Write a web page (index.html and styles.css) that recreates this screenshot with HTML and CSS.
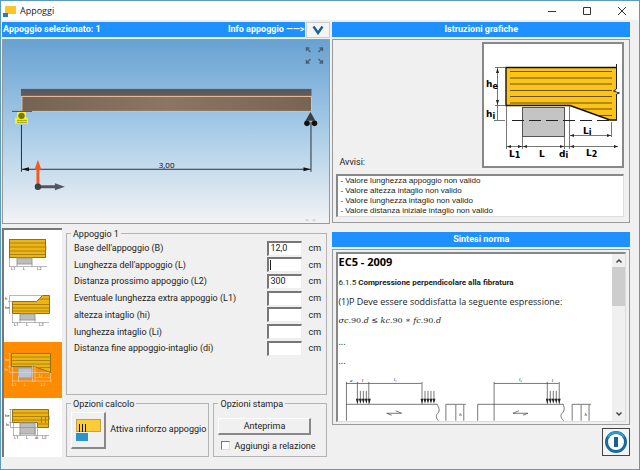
FILE: index.html
```html
<!DOCTYPE html>
<html lang="it">
  <head>
    <meta charset="UTF-8" />
    <meta name="viewport" content="width=device-width, initial-scale=1.0" />
    <title>Appoggi</title>
    <link rel="stylesheet" href="styles.css">
  </head>
  <body>
    <div class="window">
      <header class="titlebar">
        <svg class="app-icon" viewBox="0 0 13 12" width="13" height="12">
          <rect x="2" y="1" width="11" height="8" fill="#f9c62c" />
          <rect x="0" y="8" width="5" height="4" fill="#2a7fb8" />
        </svg>
        <h1>Appoggi</h1>
        <button type="button" class="win-btn" aria-label="Riduci">
          <svg viewBox="0 0 10 10" width="10" height="10"><path d="M1 5.500h8" /></svg>
        </button>
        <button type="button" class="win-btn" aria-label="Ingrandisci">
          <svg viewBox="0 0 10 10" width="10" height="10"><path d="M1.500 1.500h7v7h-7z" /></svg>
        </button>
        <button type="button" class="win-btn" aria-label="Chiudi">
          <svg viewBox="0 0 10 10" width="10" height="10"><path d="M1 1l8 8M9 1l-8 8" /></svg>
        </button>
      </header>

      <main class="content">
        <section class="column">
          <div class="view-head">
            <h2 class="bar bar-split"><span>Appoggio selezionato: 1</span><span>Info appoggio ——&gt;</span></h2>
            <button type="button" class="info-btn" aria-label="Info appoggio">
              <svg viewBox="0 0 12 10" width="12" height="10"><path d="M1.500 1.500L6 8l4.500-6.500" fill="none" stroke="#1b6390" stroke-width="2.400" /></svg>
            </button>
          </div>
          <div class="view">
            <svg viewBox="3 40 327 183">
              <path d="M311 52l-4-4M307 51v-3h3M319 52l4-4M320 48h3v3M311 59l-4 4M307 60v3h3M319 59l4 4M323 60v3h-3" fill="none" stroke="#4c5f70" stroke-width="1.400" />
              <rect x="21" y="89" width="291" height="5" fill="#535a60" />
              <rect x="21" y="94" width="291" height="2" fill="#6b5550" />
              <rect x="22" y="96.500" width="290" height="15" fill="url(#wood)" stroke="#e8bf98" />
              <path d="M12 111.500h20" stroke="#3a5360" />
              <path d="M17 112h9v6h2v6H15v-6h2z" fill="#f4f41c" />
              <circle cx="21.500" cy="116" r="3.200" fill="#77770c" />
              <path d="M17 120.500h10M17 122.500h10" stroke="#8f8f10" stroke-width=".8" />
              <path d="M311 112l5 9h-10z" fill="#3b3f43" />
              <circle cx="307.500" cy="123.500" r="2.800" fill="#111" />
              <circle cx="315" cy="123.500" r="2.800" fill="#111" />
              <path d="M21.500 125v47M311.500 122v50M22 169.500h289" stroke="#26323c" fill="none" />
              <path d="M22 169.500l7-2v4zM311 169.500l-7-2v4z" fill="#111" />
              <text x="159" y="168" class="dim-text">3,00</text>
              <path d="M38 187v-18" stroke="#f15a24" stroke-width="3" />
              <path d="M34.500 170l3.500-10 3.500 10z" fill="#f15a24" />
              <path d="M38 187h18" stroke="#54585c" stroke-width="3" />
              <path d="M55 183.500l10 3.500-10 3.500z" fill="#54585c" />
              <circle cx="38" cy="187" r="3.200" fill="#3d4145" />
              <path d="M306 220.500h3M313 220.500h3" stroke="#d3d6d9" stroke-width="2" />
              <defs>
                <linearGradient id="wood" x1="0" x2="1">
                  <stop offset="0" stop-color="#756352" />
                  <stop offset=".5" stop-color="#8a7663" />
                  <stop offset="1" stop-color="#786453" />
                </linearGradient>
              </defs>
            </svg>
          </div>

          <div class="editor">
            <nav class="thumbs">
              <button type="button" aria-label="Appoggio semplice">
                <svg viewBox="4 231 58 56">
                  <rect x="9.500" y="240.500" width="36" height="18" class="wood" />
                  <path d="M10 244h35M10 248h35M10 252h35M10 255.500h35" class="grain" />
                  <rect x="17" y="259" width="15" height="6" class="block" />
                  <path d="M9 267.500h38M9.500 259v9M17 265v3M32 265v3M46 247v4" class="fine" />
                  <text x="11" y="271">L1</text><text x="23" y="271">L</text><text x="37" y="271">L2</text>
                </svg>
              </button>
              <button type="button" aria-label="Appoggio con intaglio superiore">
                <svg viewBox="4 287 58 56">
                  <path d="M12.500 302.500h24l6-6h7v18h-37z" class="wood" />
                  <path d="M13 305.500h36M13 309h36M13 312h36M39 300h10" class="grain" />
                  <rect x="20" y="315" width="15" height="6" class="block" />
                  <path d="M10 296.500h32M9.500 296v19M8 302.500h5M12 323.500h37M12.500 315v9M20 320v4M35 320v4M49.500 304v3" class="fine" />
                  <text x="5" y="301">h</text><text x="5" y="310">he</text><text x="14" y="327">L1</text><text x="26" y="327">L</text><text x="39" y="327">L2</text>
                </svg>
              </button>
              <button type="button" class="selected" aria-label="Appoggio con intaglio inclinato">
                <svg viewBox="4 343 58 56">
                  <path d="M11.500 354.500h39v19l-16-6h-23z" class="wood" />
                  <path d="M12 358h38M12 361.500h38M12 365h38M39 368.500h11" class="grain" />
                  <rect x="18" y="369" width="14" height="10" class="block" />
                  <path d="M9.500 354v20M8 354.500h3M8 367.500h3M9 373.500h40M12 382h40M12.500 368v15M18.500 377v6M32.500 367v16M35 367v16M50.500 374v9M35 378.500h15" class="fine" />
                  <text x="5" y="362">he</text><text x="5" y="372">hi</text><text x="12" y="387">L1</text><text x="24" y="387">L</text><text x="41" y="387">L2</text><text x="39" y="378">Li</text>
                </svg>
              </button>
              <button type="button" aria-label="Appoggio con rinforzo">
                <svg viewBox="4 400 58 56">
                  <path d="M12.500 411.500h36v18h-11v-5h-25z" class="wood" />
                  <path d="M13 415h35M13 418.500h35M13 422h35M38 426h10" class="grain" />
                  <path d="M41.500 419v6M45.500 419v6" stroke="#e2571e" />
                  <rect x="20" y="425" width="15" height="11" class="block" />
                  <path d="M10.500 411v18M9 411.500h4M9 424.500h4M10 429.500h27M13 437.500h36M13.500 425v13M20 435v3M35 430v8M37.500 429v9M49.500 418v4" class="fine" />
                  <text x="5" y="419">he</text><text x="6" y="428">hi</text><text x="14" y="441">L1</text><text x="26" y="441">L</text><text x="35" y="441">di</text><text x="42" y="441">L2</text>
                </svg>
              </button>
            </nav>

            <form class="forms">
              <fieldset class="group support">
                <legend>Appoggio 1</legend>
                <div class="fields">
                  <label for="base">Base dell'appoggio (B)</label><input type="text" id="base" value="12,0" /><span>cm</span>
                  <label for="length">Lunghezza dell'appoggio (L)</label><input type="text" id="length" class="editing" /><span>cm</span>
                  <label for="next">Distanza prossimo appoggio (L2)</label><input type="text" id="next" value="300" /><span>cm</span>
                  <label for="extra">Eventuale lunghezza extra appoggio (L1)</label><input type="text" id="extra" /><span>cm</span>
                  <label for="notch-height">altezza intaglio (hi)</label><input type="text" id="notch-height" /><span>cm</span>
                  <label for="notch-length">lunghezza intaglio (Li)</label><input type="text" id="notch-length" /><span>cm</span>
                  <label for="notch-end">Distanza fine appoggio-intaglio (di)</label><input type="text" id="notch-end" /><span>cm</span>
                </div>
              </fieldset>
              <div class="options">
                <fieldset class="group calc">
                  <legend>Opzioni calcolo</legend>
                  <button type="button" class="raised reinforce" id="reinforce">
                    <svg viewBox="0 0 26 24" width="26" height="24">
                      <rect x="1.500" y="1.500" width="24" height="12" fill="#fccb38" stroke="#c5a136" />
                      <rect x="1" y="15" width="12" height="8" fill="#2d93cb" />
                      <path d="M4.500 6v8M7.500 6v8M10.500 6v8" stroke="#111" />
                    </svg>
                  </button>
                  <label for="reinforce">Attiva rinforzo appoggio</label>
                </fieldset>
                <fieldset class="group print">
                  <legend>Opzioni stampa</legend>
                  <button type="button" class="raised preview">Anteprima</button>
                  <label class="check"><input type="checkbox" />Aggiungi a relazione</label>
                </fieldset>
              </div>
            </form>
          </div>
        </section>

        <section class="column">
          <h2 class="bar">Istruzioni grafiche</h2>
          <div class="panel guide">
            <div class="guide-top">
              <h3>Avvisi:</h3>
              <div class="sunken guide-picture">
                <svg viewBox="484 45 138 122">
                  <path d="M506 68.500h110V121h-6l-40-14.500h-64z" fill="#fcc419" />
                  <path d="M510 72.500h102M510 79h102M510 85h102M510 91.500h102M510 97.500h102M510 104h102M582 110h30M599 116.500h13" stroke="#6b510a" />
                  <path d="M616 68.500h-110v38h64L610 121h7" fill="none" stroke="#111" stroke-width="1.400" />
                  <path d="M616.500 65v25l-3 2 6 2-3 1v26" fill="none" stroke="#222" />
                  <rect x="522.500" y="108.500" width="42" height="29" fill="#c4c4c4" stroke="#555" />
                  <path d="M495 68.500h10M495 106.500h10M497.500 69v52M494 121.500h11M506.500 107v43M522.500 137v13M564.500 137v13M569.500 107v43M570 136.500h41M611.500 123v15M506 147.500h112" class="line" />
                  <path d="M512 121.500h98" stroke="#222" stroke-dasharray="12 5" />
                  <path d="M497.500 69l-1.500 5h3zM497.500 106l-1.500-5h3zM507 147.500l4-1.500v3zM522 147.500l-4-1.500v3zM523 147.500l4-1.500v3zM564 147.500l-4-1.500v3zM570 147.500l4-1.500v3zM618 147.500l-4-1.500v3zM570 136.500l4-1.500v3zM611 136.500l-4-1.500v3z" fill="#222" />
                  <g class="symbols">
                    <text x="486" y="88">h<tspan dy="2" class="sub">e</tspan></text>
                    <text x="486" y="118">h<tspan dy="2" class="sub">i</tspan></text>
                    <text x="583" y="135">L<tspan dy="1" class="sub">i</tspan></text>
                    <text x="509" y="158">L<tspan dy="1" class="sub">1</tspan></text>
                    <text x="539" y="158">L</text>
                    <text x="559" y="158">d<tspan dy="1" class="sub">i</tspan></text>
                    <text x="586" y="157">L<tspan dy="1" class="sub">2</tspan></text>
                  </g>
                </svg>
              </div>
            </div>
            <ul class="sunken warnings">
              <li>- Valore lunghezza appoggio non valido</li>
              <li>- Valore altezza intaglio non valido</li>
              <li>- Valore lunghezza intaglio non valido</li>
              <li>- Valore distanza iniziale intaglio non valido</li>
            </ul>
          </div>

          <h2 class="bar bar-norm">Sintesi norma</h2>
          <div class="panel norm">
            <div class="sunken reader">
              <article>
                <h3>EC5 - 2009</h3>
                <p class="clause">6.1.5 <b>Compressione perpendicolare alla fibratura</b></p>
                <p class="rule">(1)P Deve essere soddisfatta la seguente espressione:</p>
                <p class="formula"><i>σc</i>.90.<i>d</i> ≤ <i>kc</i>.90 ∗ <i>fc</i>.90.<i>d</i></p>
                <p>...</p>
                <p>...</p>
                <svg viewBox="338 376 275 47">
                  <path d="M346.500 384v39M346 385.500h76M357.500 384v22M369 384v22M422.500 384v22M346 406.500h92M495 384v39M495 385.500h65M548.500 384v22M560.500 384v22M478.500 423v-16.500h86M446.500 423v-16.500h20M456.500 407v16M573.500 423v-16.500h19M582.500 407v16M464.500 407v16M590.500 407v16" class="line" />
                  <path d="M437 406c4 5 3 8 1 10s-1 5 1 7M564 406c3 5 1 8-1 10s0 5 2 7" class="line" />
                  <path d="M360.500 393v10M363.500 393v10M366.500 393v10M425.500 393v10M428.500 393v10M431.500 393v10M434.500 393v10M551.500 393v10M554.500 393v10M557.500 393v10" class="line" />
                  <path d="M356 401h3l-1.500 5zM359 401h3l-1.500 5zM362 401h3l-1.500 5zM365 401h3l-1.500 5zM368 401h3l-1.500 5zM421 401h3l-1.500 5zM424 401h3l-1.500 5zM427 401h3l-1.500 5zM430 401h3l-1.500 5zM433 401h3l-1.500 5zM547 401h3l-1.500 5zM550 401h3l-1.500 5zM553 401h3l-1.500 5zM556 401h3l-1.500 5zM559 401h3l-1.500 5z" fill="#222" />
                  <path d="M402 415.500h-15M396 413l6 2.500M387 415.500l5 2M529 415.500h-15M514 415.500l6-2.500M529 415.500l-5 2" class="line" />
                  <g class="marks">
                    <text x="350" y="384">a</text><text x="362" y="384">l</text><text x="394" y="383">l₁</text><text x="520" y="383">l₂</text><text x="553" y="384">l</text><text x="460" y="418">h</text><text x="586" y="418">h</text>
                  </g>
                </svg>
              </article>
              <div class="scrollbar">
                <button type="button" aria-label="Su"><svg viewBox="0 0 8 6" width="8" height="6"><path d="M1.500 4.500L4 2l2.500 2.500" /></svg></button>
                <div class="scroll-thumb"></div>
                <button type="button" aria-label="Giù"><svg viewBox="0 0 8 6" width="8" height="6"><path d="M1.500 1.500L4 4l2.500-2.500" /></svg></button>
              </div>
            </div>
          </div>
          <button type="button" class="exit-btn" aria-label="Esci">
            <svg viewBox="0 0 24 24" width="24" height="24">
              <circle cx="12" cy="12" r="9.500" fill="#fff" stroke="#176b9f" stroke-width="3" />
              <path d="M4 7a9.500 9.500 0 0 1 16 0" fill="none" stroke="#2ba1d8" stroke-width="2" />
              <path d="M12 7v10" stroke="#176494" stroke-width="4" />
            </svg>
          </button>
        </section>
      </main>
    </div>
  </body>
</html>
```
FILE: styles.css
```css
* {
  box-sizing: border-box;
}
body {
  margin: 0;
  font-family: Roboto, Arial, sans-serif;
  font-size: 9px;
  line-height: 12px;
  color: #222;
  background-color: #f0f0f0;
}
h1,
h2,
h3,
p,
ul {
  margin: 0;
  padding: 0;
}
button,
input {
  font: inherit;
  color: inherit;
  margin: 0;
  padding: 0;
}
svg {
  display: block;
}
.window {
  min-height: 100vh;
  border: 1px solid #5b9bbf;
}
.titlebar {
  display: flex;
  align-items: center;
  height: 19px;
  padding-left: 2px;
  background-color: #fff;
}
.titlebar h1 {
  flex: 1;
  margin-left: 4px;
  font-family: "Open Sans", sans-serif;
  font-size: 9px;
  font-weight: normal;
}
.win-btn {
  display: flex;
  align-items: center;
  justify-content: center;
  width: 35px;
  height: 18px;
  border: none;
  background: none;
}
.win-btn path {
  fill: none;
  stroke: #333;
}
.content {
  display: grid;
  grid-template-columns: 329fr 298fr;
  gap: 2px;
  padding: 2px 9px 0 1px;
}
.column {
  display: flex;
  flex-direction: column;
  min-width: 0;
}
.bar {
  flex: none;
  height: 15px;
  font-size: 9px;
  line-height: 15px;
  color: #fff;
  text-align: center;
  white-space: nowrap;
  background-color: #1e90ff;
}
.view-head {
  display: flex;
  height: 17px;
}
.bar-split {
  display: flex;
  flex: 1;
  justify-content: space-between;
  padding: 0 1px;
}
.info-btn {
  display: flex;
  align-items: center;
  justify-content: center;
  width: 24px;
  height: 16px;
  margin-left: 1px;
  border: 1px solid #ccc;
  background-color: #f4f4f4;
}
.view {
  border: 1px solid #999;
  background: linear-gradient(#68a2d2, #a9cce7 50%, #f2f3f5);
}
.dim-text {
  font-family: "Open Sans", sans-serif;
  font-size: 8px;
}
.editor {
  display: flex;
  gap: 4px;
  margin-top: 4px;
}
.thumbs {
  display: flex;
  flex-direction: column;
  flex: none;
  width: 60px;
  border-top: 2px solid #777;
  border-left: 2px solid #777;
  background-color: #fff;
}
.thumbs button {
  border: none;
  background-color: #fff;
}
.thumbs .selected {
  background-color: #ff8c00;
}
.thumbs text {
  font-size: 4px;
  fill: #222;
}
.wood {
  fill: #edb514;
  stroke: #927116;
}
.grain {
  stroke: #ad8210;
}
.block {
  fill: #bdbdbd;
  stroke: #999;
}
.fine {
  fill: none;
  stroke: #888;
  stroke-width: 0.6;
}
.selected .fine {
  stroke: #e6d5bd;
}
.selected text {
  fill: #f5e6d0;
}
.selected .block {
  fill: #b9c4d8;
}
.forms {
  display: flex;
  flex: 1;
  flex-direction: column;
  gap: 3px;
  min-width: 0;
  padding-right: 3px;
}
.group {
  min-width: 0;
  margin: 0;
  padding: 0;
  border: 1px solid #b4b4b4;
}
.group legend {
  margin-left: 4px;
  padding: 0 2px;
}
.support {
  height: 167px;
}
.fields {
  display: grid;
  grid-template-columns: 1fr 35px 18px;
  grid-auto-rows: 1fr;
  column-gap: 6px;
  align-items: center;
  height: 117px;
  padding-left: 7px;
}
.fields input {
  width: 35px;
  height: 15px;
  padding: 0 1px 2px;
  border: 1px solid #eee;
  border-top: 2px solid #777;
  border-left: 2px solid #777;
  background-color: #fff;
}
.fields .editing {
  background: linear-gradient(#222, #222) 1px 1px / 1px 10px no-repeat #fff;
}
.options {
  display: flex;
  gap: 4px;
}
.calc {
  flex: 144;
}
.print {
  flex: 114;
}
.calc,
.print {
  height: 59px;
  white-space: nowrap;
}
.raised {
  border: 1px solid #fff;
  border-right: 2px solid #888;
  border-bottom: 2px solid #888;
  background-color: #f0f0f0;
}
.reinforce {
  display: inline-flex;
  align-items: center;
  justify-content: center;
  width: 35px;
  height: 37px;
  margin: 2px 2px 0 4px;
  vertical-align: middle;
}
.preview {
  display: block;
  width: 93px;
  height: 17px;
  margin: 8px 0 5px 4px;
}
.check {
  display: flex;
  align-items: center;
  gap: 4px;
  padding-left: 7px;
}
.check input {
  flex: none;
  width: 9px;
  height: 9px;
  appearance: none;
  border: 1px solid #ddd;
  border-top-color: #777;
  border-left-color: #777;
  background-color: #fff;
}
.panel {
  border: 1px solid #999;
}
.guide {
  margin-top: 2px;
  padding: 2px 5px 5px 3px;
}
.guide-top {
  display: flex;
  align-items: flex-end;
  justify-content: space-between;
}
.guide-top h3 {
  margin-left: 3px;
  font-size: 9px;
  font-weight: normal;
}
.sunken {
  border: 1px solid #ddd;
  border-top: 2px solid #888;
  border-left: 2px solid #888;
  background-color: #fff;
}
.guide-picture {
  width: 142px;
  border: 2px solid #888;
}
.line {
  fill: none;
  stroke: #555;
  stroke-width: 0.8;
}
.symbols {
  font-family: "DejaVu Sans", sans-serif;
  font-size: 9px;
  font-weight: bold;
}
.symbols .sub {
  font-size: 8px;
}
.warnings {
  margin-top: 6px;
  padding: 0 2px;
  list-style: none;
  font-family: "Liberation Sans", Arial, sans-serif;
  font-size: 8px;
  line-height: 10px;
}
.bar-norm {
  margin-top: 9px;
}
.norm {
  margin-top: 2px;
  padding: 2px 3px;
}
.reader {
  display: flex;
}
.reader article {
  flex: 1;
  min-width: 0;
  font-family: "Open Sans", sans-serif;
  font-size: 9px;
  white-space: nowrap;
}
.reader h3 {
  margin-bottom: 9px;
  padding-top: 2px;
  font-size: 11px;
  color: #000;
}
.reader p {
  margin-bottom: 7px;
}
.reader .clause {
  font-family: Roboto, sans-serif;
  font-size: 8px;
}
.reader .formula {
  margin-bottom: 9px;
  font-family: "DejaVu Serif", serif;
  font-size: 8px;
}
.marks {
  font-family: "Liberation Serif", serif;
  font-size: 5px;
  font-style: italic;
}
.scrollbar {
  display: flex;
  flex: none;
  flex-direction: column;
  width: 13px;
  background-color: #f0f0f0;
}
.scrollbar button {
  display: flex;
  align-items: center;
  justify-content: center;
  height: 13px;
  border: none;
  background: none;
}
.scrollbar button:last-child {
  margin-top: auto;
}
.scrollbar path {
  fill: none;
  stroke: #444;
  stroke-width: 1.5;
}
.scroll-thumb {
  height: 39px;
  background-color: #cdcdcd;
}
.exit-btn {
  display: flex;
  align-items: center;
  justify-content: center;
  align-self: flex-end;
  width: 28px;
  height: 28px;
  margin-top: 3px;
  border: 1px solid #444;
  background-color: #f4f4f4;
}
```
